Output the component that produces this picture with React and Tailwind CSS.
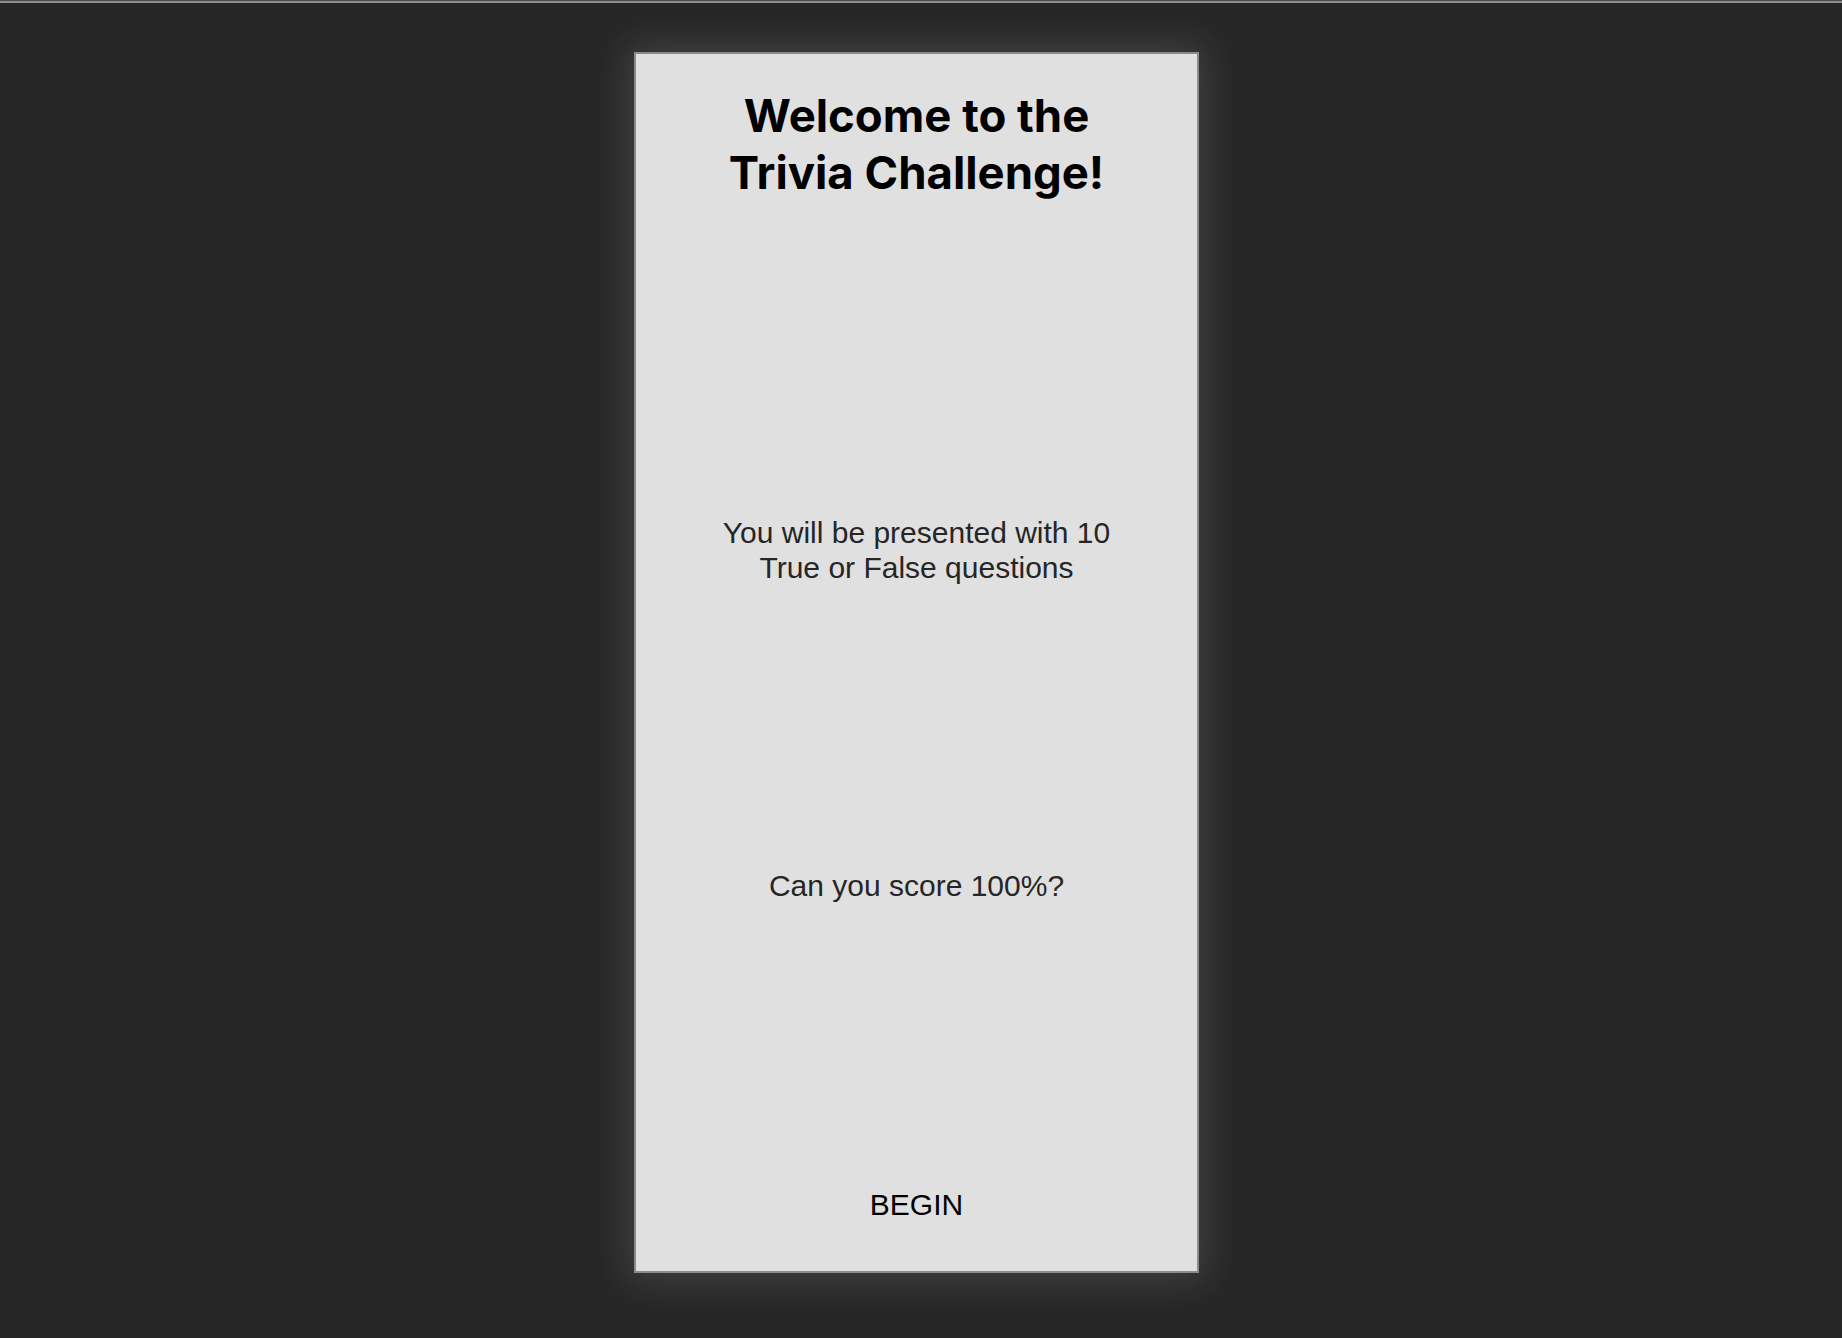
export default function App() {
  return (
    <div className="min-h-screen w-full bg-[#262626]" style={{ fontFamily: '"Liberation Sans", Arial, sans-serif' }}>
      <div className="h-[3px] w-full border-t border-[#4a4a4a] bg-[#8f8f8f]" />
      <div className="flex justify-center pr-[9px] pt-[49px] pb-[65px]">
        <div className="flex h-[1221px] w-[565px] flex-col items-center border-2 border-[#8a8a8a] bg-[#e0e0e0] shadow-[0_0_36px_8px_rgba(255,255,255,0.13)]">
          <h1
            className="mt-[33px] text-center text-[45.5px] font-bold leading-[57px] text-black"
            style={{ fontFamily: 'Inter, "Noto Sans", sans-serif' }}
          >
            Welcome to the
            <br />
            Trivia Challenge!
          </h1>
          <p className="mt-[314px] text-center text-[30px] leading-[35px] text-[#262626]">
            You will be presented with 10
            <br />
            True or False questions
          </p>
          <p className="mt-[283px] text-center text-[30px] leading-[35px] text-[#262626]">Can you score 100%?</p>
          <button className="mt-[284px] bg-transparent text-[30px] leading-[35px] text-black">BEGIN</button>
        </div>
      </div>
    </div>
  );
}
